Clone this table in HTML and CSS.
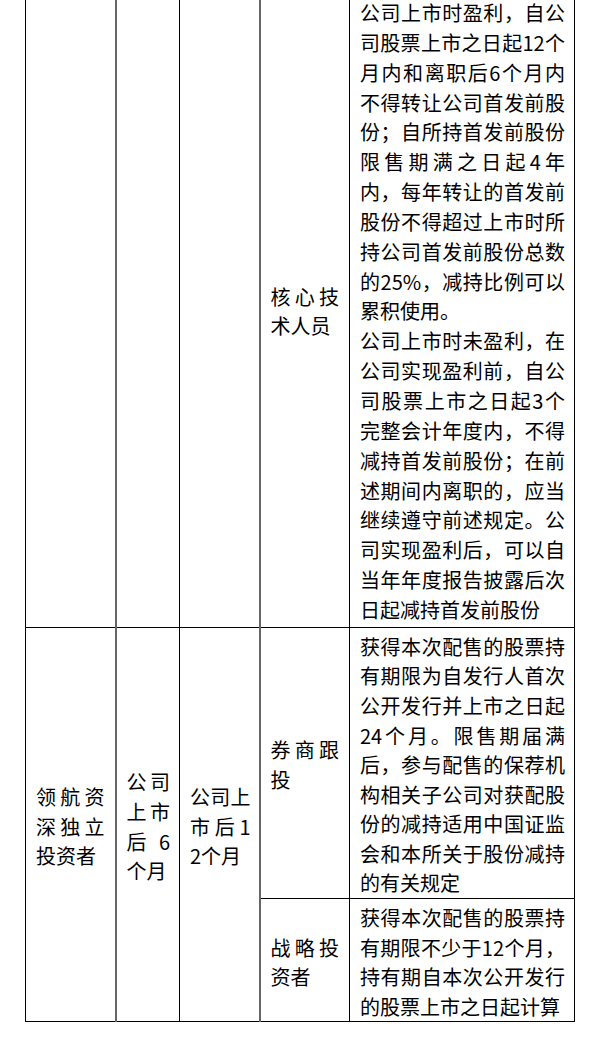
FILE: index.html
```html
<!DOCTYPE html>
<html lang="zh-CN">
<head>
<meta charset="utf-8">
<title>限售期安排</title>
<link rel="stylesheet" href="styles.css">
</head>
<body>
<table class="lockup">
  <colgroup>
    <col class="w1"><col class="w2"><col class="w3"><col class="w4"><col class="w5">
  </colgroup>
  <tbody>
    <tr class="first">
      <td class="c1"></td>
      <td class="c2"></td>
      <td class="c3"></td>
      <td class="c4">核心技术人员</td>
      <td class="c5"><p>公司上市时盈利，自公司股票上市之日起12个月内和离职后6个月内不得转让公司首发前股份；自所持首发前股份限售期满之日起4年内，每年转让的首发前股份不得超过上市时所持公司首发前股份总数的25%，减持比例可以累积使用。</p><p>公司上市时未盈利，在公司实现盈利前，自公司股票上市之日起3个完整会计年度内，不得减持首发前股份；在前述期间内离职的，应当继续遵守前述规定。公司实现盈利后，可以自当年年度报告披露后次日起减持首发前股份</p></td>
    </tr>
    <tr>
      <td class="c1" rowspan="2">领航资深独立投资者</td>
      <td class="c2" rowspan="2">公司上市后6个月</td>
      <td class="c3" rowspan="2">公司上市后12个月</td>
      <td class="c4">券商跟投</td>
      <td class="c5">获得本次配售的股票持有期限为自发行人首次公开发行并上市之日起24个月。限售期届满后，参与配售的保荐机构相关子公司对获配股份的减持适用中国证监会和本所关于股份减持的有关规定</td>
    </tr>
    <tr>
      <td class="c4">战略投资者</td>
      <td class="c5">获得本次配售的股票持有期限不少于12个月，持有期自本次公开发行的股票上市之日起计算</td>
    </tr>
  </tbody>
</table>
</body>
</html>
```

FILE: styles.css
```css
html, body {
  margin: 0;
  padding: 0;
  background: #ffffff;
}

body {
  font-family: "Noto Sans CJK SC", "Noto Sans", sans-serif;
  font-size: 20px;
  line-height: 29.6px;
  color: #000000;
}

.lockup {
  border-collapse: collapse;
  table-layout: fixed;
  width: 549px;
  margin: -2px 0 0 25px;
}

.w1 { width: 90px; }
.w2 { width: 64px; }
.w3 { width: 80px; }
.w4 { width: 90px; }
.w5 { width: 225px; }

.lockup td {
  border: 1px solid #000000;
  padding: 4px 10px 0 10px;
  vertical-align: middle;
  text-align: justify;
  word-break: break-all;
}

.lockup tr.first td {
  border-top: none;
  padding-top: 0;
  padding-bottom: 2px;
  line-height: 29.85px;
}

.lockup td.c2,
.lockup td.c4 {
  border-left: 2px solid #666666;
}

.lockup td.c2 { padding-right: 9px; }
.lockup td.c3 { padding-right: 8px; }
.lockup td.c5 { padding-right: 9px; }

.lockup p {
  margin: 0;
}
```
